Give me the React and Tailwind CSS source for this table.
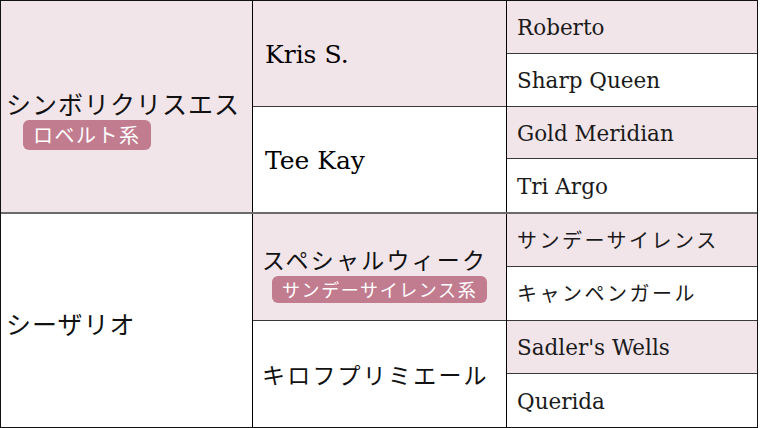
import React from "react";

const jp = { fontFamily: '"Noto Sans CJK JP", "Noto Sans", sans-serif' };
const serif = { fontFamily: '"DejaVu Serif", "Noto Sans CJK JP", serif' };

function Badge({ children, className }) {
  return (
    <span
      className={"inline-block rounded-[6px] bg-[#c27c8f] text-white leading-none " + className}
      style={jp}
    >
      {children}
    </span>
  );
}

function Cell3({ text, pink, jpText, last }) {
  return (
    <div
      className={
        "flex items-center pl-[10px] text-[#1a1a1a] " +
        (jpText ? "" : "pt-[3px] ") +
        (pink ? "bg-[#f2e5ea] " : "bg-white ") +
        (last ? "" : "border-b border-[#3a3a3a]")
      }
    >
      {jpText ? (
        <span className="text-[20px] tracking-[2.5px]" style={jp}>{text}</span>
      ) : (
        <span className="text-[21.5px]" style={serif}>{text}</span>
      )}
    </div>
  );
}

export default function App() {
  return (
    <div className="w-[760px] h-[428px] bg-white">
      <div className="w-[758px] h-[428px] border border-[#111] flex flex-col">
        {/* Top half */}
        <div className="flex h-[213px] border-b-2 border-[#6b6b6b]">
          <div className="w-[252px] bg-[#f2e5ea] border-r border-black flex flex-col justify-center pl-[5px] pt-[24px]">
            <div className="text-[25px] leading-[30px] tracking-[1px] text-[#111]" style={jp}>
              シンボリクリスエス
            </div>
            <div className="pl-[17px] pt-[2px]">
              <Badge className="text-[20px] px-[10px] py-[5px] tracking-[1.5px]">ロベルト系</Badge>
            </div>
          </div>
          <div className="w-[254px] grid grid-rows-2 border-r border-black">
            <div className="bg-[#f2e5ea] border-b border-[#3a3a3a] flex items-center pl-[12px] pt-[3px]">
              <span className="text-[25px]" style={serif}>Kris S.</span>
            </div>
            <div className="bg-white flex items-center pl-[12px] pt-[3px]">
              <span className="text-[25px]" style={serif}>Tee Kay</span>
            </div>
          </div>
          <div className="flex-1 grid grid-rows-4">
            <Cell3 text="Roberto" pink />
            <Cell3 text="Sharp Queen" />
            <Cell3 text="Gold Meridian" pink />
            <Cell3 text="Tri Argo" last />
          </div>
        </div>
        {/* Bottom half */}
        <div className="flex flex-1">
          <div className="w-[252px] bg-white border-r border-black flex items-center pl-[5px] pt-[6px]">
            <div className="text-[25px] tracking-[1px] text-[#111]" style={jp}>シーザリオ</div>
          </div>
          <div className="w-[254px] grid grid-rows-2 border-r border-black">
            <div className="bg-[#f2e5ea] border-b border-[#3a3a3a] flex flex-col justify-center pl-[9px] pt-[14px]">
              <div className="text-[23px] leading-[28px] tracking-[2.2px] text-[#111]" style={jp}>
                スペシャルウィーク
              </div>
              <div className="pl-[10px] pt-[3px]">
                <Badge className="text-[18px] px-[10px] py-[4.5px] tracking-[1.6px]">サンデーサイレンス系</Badge>
              </div>
            </div>
            <div className="bg-white flex items-center pl-[9px]">
              <span className="text-[23px] tracking-[2.2px] text-[#111]" style={jp}>キロフプリミエール</span>
            </div>
          </div>
          <div className="flex-1 grid grid-rows-4">
            <Cell3 text="サンデーサイレンス" pink jpText />
            <Cell3 text="キャンペンガール" jpText />
            <Cell3 text="Sadler's Wells" pink />
            <Cell3 text="Querida" last />
          </div>
        </div>
      </div>
    </div>
  );
}
